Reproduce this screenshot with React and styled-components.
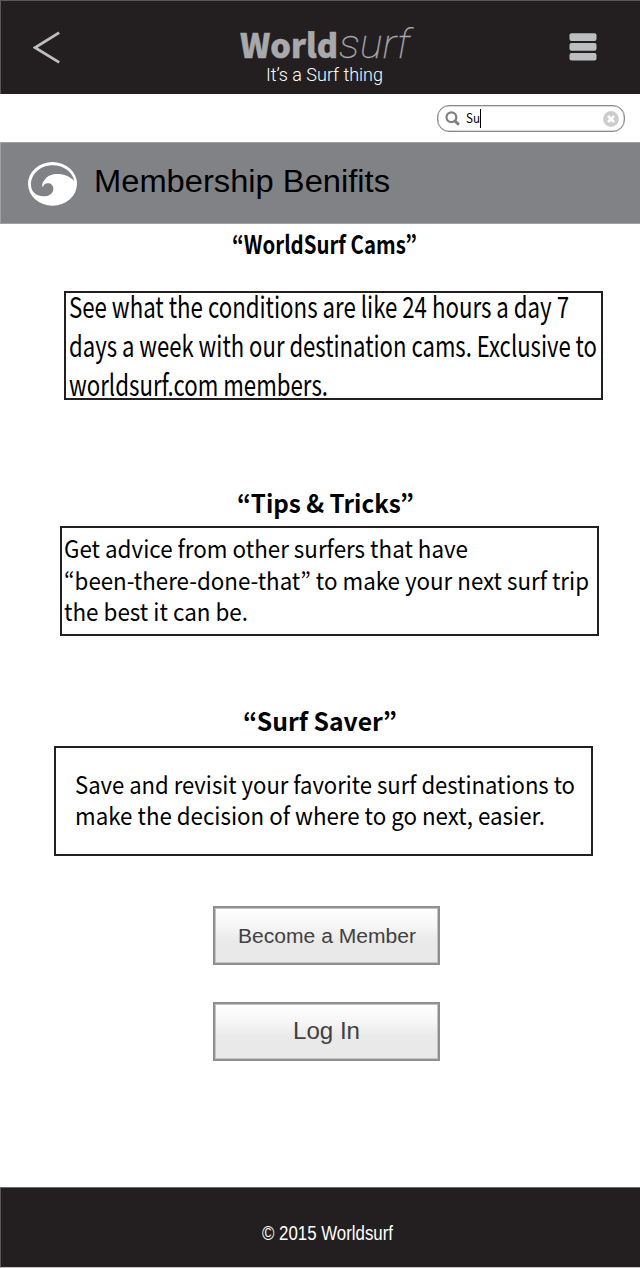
import React, { useLayoutEffect, useRef, useState } from "react";
import styled, { createGlobalStyle } from "styled-components";

const humanist = '"Noto Sans CJK KR", "Noto Sans", sans-serif';
const grotesque = '"Liberation Sans", Arial, sans-serif';

const GlobalStyle = createGlobalStyle`
  * { box-sizing: border-box; }
  body { margin: 0; background: #fff; }
  h1, h2, p { margin: 0; font-weight: inherit; }
`;

const Page = styled.div`
  display: flex;
  flex-direction: column;
  width: 640px;
  height: 1268px;
  overflow: hidden;
  background: #fff;
  color: #000;
  font-family: ${humanist};
`;

/* A single line of type set to an exact measure. */
const LineBox = styled.span`
  display: flex;
  width: ${(p) => p.$width}px;
  white-space: nowrap;
`;

const LineText = styled.span`
  flex: none;
  transform-origin: 0 50%;
`;

function Line({ width, children }) {
  const ref = useRef(null);
  const [natural, setNatural] = useState(width);
  useLayoutEffect(() => {
    setNatural(ref.current.getBoundingClientRect().width);
  }, []);
  return (
    <LineBox $width={width}>
      <LineText
        ref={ref}
        style={{
          transform: `scaleX(${width / natural})`,
          marginRight: width - natural,
        }}
      >
        {children}
      </LineText>
    </LineBox>
  );
}

const Header = styled.header`
  display: flex;
  height: 94px;
  padding: 0 43px 0 32px;
  background: #231f20;
  border-top: 1px solid #5b5859;
  border-left: 1px solid #5b5859;
`;

const IconButton = styled.button`
  display: flex;
  align-self: flex-start;
  margin: ${(p) => p.$top}px 0 0;
  padding: 0;
  border: 0;
  background: none;
`;

const Brand = styled.div`
  display: flex;
  flex-direction: column;
  width: 174px;
  margin: 0 auto 0 179px;
  padding-top: 19px;
`;

const Wordmark = styled.h1`
  display: flex;
  height: 44px;
  line-height: 48px;
  color: #a7a9ac;
`;

const World = styled.span`
  font-size: 33px;
  font-weight: 900;
  -webkit-text-stroke: 0.5px #a7a9ac;
`;

const Surf = styled.span`
  margin-left: 1px;
  font-family: Roboto, sans-serif;
  font-size: 41px;
  font-style: italic;
  font-weight: 100;
  -webkit-text-stroke: 0.3px #a7a9ac;
`;

const Tagline = styled.p`
  margin-left: 26px;
  color: #fff;
  font-family: Roboto, sans-serif;
  font-size: 17.5px;
  font-weight: 300;
  line-height: 22px;
`;

const SearchRow = styled.div`
  display: flex;
  justify-content: flex-end;
  height: 48px;
  padding: 11px 15px 0 0;
`;

const SearchField = styled.div`
  display: flex;
  align-items: center;
  width: 188px;
  height: 27px;
  padding: 0 5px 0 7px;
  border: 1px solid #8b8b8b;
  border-radius: 12px;
  box-shadow: inset 0 0 0 0.5px #b0b0b0;
`;

const Query = styled.span`
  margin: -2px 0 0 6px;
  font-size: 12.5px;
  line-height: 24px;
`;

const Caret = styled.span`
  width: 1px;
  height: 19px;
  margin-right: auto;
  background: #000;
`;

const TitleBand = styled.div`
  display: flex;
  height: 82px;
  padding-left: 27px;
  background: #808285;
  border: solid #a0a1a4;
  border-width: 1px 0 1px 1px;
`;

const LogoSlot = styled.div`
  display: flex;
  margin: 19px 17px 0 0;
`;

const BandTitle = styled.h2`
  padding-top: 19px;
  font-family: ${grotesque};
  font-size: 31px;
  line-height: 40px;
`;

const Main = styled.main`
  display: flex;
  flex: 1;
  flex-direction: column;
`;

const Benefit = styled.section`
  display: flex;
  flex-direction: column;
  margin-top: ${(p) => p.$top}px;
`;

const BenefitHeading = styled.h2`
  margin: 0 0 ${(p) => p.$gap}px ${(p) => p.$left}px;
  font-size: 25px;
  font-weight: 700;
  line-height: 30px;
`;

const BenefitBox = styled.div`
  width: 539px;
  height: ${(p) => p.$height}px;
  margin-left: ${(p) => p.$left}px;
  border: 2px solid #231f20;
`;

const BenefitText = styled.p`
  margin: ${(p) => p.$top}px 0 0 ${(p) => p.$left}px;
  font-size: ${(p) => p.$size}px;
  line-height: ${(p) => p.$leading}px;
`;

const Actions = styled.div`
  display: flex;
  flex-direction: column;
  gap: 37px;
  margin: 50px 0 0 213px;
`;

const ActionButton = styled.button`
  width: 227px;
  height: 59px;
  padding: 0 0 ${(p) => p.$lift || 0}px ${(p) => p.$inset}px;
  border: 2px solid #8f8f8f;
  box-shadow: inset 0 0 0 1px #c4c4c4;
  background: linear-gradient(#fff 0%, #f7f7f7 30%, #e9e9e9 60%, #e9e9e9 100%);
  color: #414042;
  font-family: ${grotesque};
  font-size: ${(p) => p.$size}px;
  line-height: 28px;
  text-align: left;
`;

const Footer = styled.footer`
  height: 81px;
  padding: 33px 0 0 261px;
  background: #231f20;
  border-top: 1px solid #6e6b6c;
  border-left: 1px solid #5b5859;
  border-bottom: 1px solid #c4c2c3;
  color: #fff;
  font-family: ${grotesque};
  font-size: 20.5px;
  line-height: 24px;
`;

const BackIcon = () => (
  <svg width="28" height="34" viewBox="0 0 28 34" fill="none">
    <path d="M26.2 1.6 2.2 16.6 26.2 31.4" stroke="#bcbec0" strokeWidth="2.8" />
  </svg>
);

const MenuIcon = () => (
  <svg width="28" height="28" viewBox="0 0 28 28" fill="#bcbec0">
    <rect x="0.5" y="0.3" width="27" height="7.6" rx="2" />
    <rect x="0.5" y="10.1" width="27" height="7.6" rx="2" />
    <rect x="0.5" y="19.9" width="27" height="7.6" rx="2" />
  </svg>
);

const SearchIcon = () => (
  <svg width="15" height="15" viewBox="0 0 15 15" fill="none" stroke="#808080">
    <circle cx="6.4" cy="6.3" r="4.9" strokeWidth="2.2" />
    <path d="M10 10 13 12.8" strokeWidth="3" strokeLinecap="round" />
  </svg>
);

const ClearIcon = () => (
  <svg width="16" height="16" viewBox="0 0 16 16">
    <circle cx="8" cy="8" r="7.9" fill="#cccccc" />
    <path d="M5 5 11 11M11 5 5 11" stroke="#fff" strokeWidth="2.5" />
  </svg>
);

const WaveLogo = () => (
  <svg width="49" height="44" viewBox="84 80 147 132">
    <ellipse cx="157.5" cy="145.5" rx="73.5" ry="65.5" fill="#fff" />
    <path
      fill="#808285"
      d="M223 137C217 108 189 90 158 90C121 90 93 116 93 147C93 158 96 165 101 171C108 179 119 183 130 183C147 183 160 174 160 160C160 149 151 143 142 144C134 145 130 149 129 156C124 149 128 140 134 133C143 121 157 116 172 116C193 116 209 123 223 137Z"
    />
  </svg>
);

const benefits = [
  {
    title: "“WorldSurf Cams”",
    top: 4,
    heading: { left: 232, width: 185, gap: 33 },
    box: { left: 64, height: 109 },
    text: { top: -7, left: 3, size: 29, leading: 39 },
    lines: [
      ["See what the conditions are like 24 hours a day 7", 500],
      ["days a week with our destination cams. Exclusive to", 528],
      ["worldsurf.com members.", 259],
    ],
  },
  {
    title: "“Tips & Tricks”",
    top: 87,
    heading: { left: 237, width: 177, gap: 9 },
    box: { left: 60, height: 110 },
    text: { top: 4, left: 1.5, size: 24, leading: 31.5 },
    lines: [
      ["Get advice from other surfers that have", 404],
      ["“been-there-done-that” to make your next surf trip", 525],
      ["the best it can be.", 184],
    ],
  },
  {
    title: "“Surf Saver”",
    top: 69,
    heading: { left: 243, width: 154, gap: 11 },
    box: { left: 54, height: 110 },
    text: { top: 21, left: 19, size: 24, leading: 30.8 },
    lines: [
      ["Save and revisit your favorite surf destinations to", 500],
      ["make the decision of where to go next, easier.", 470],
    ],
  },
];

export default function App() {
  return (
    <Page>
      <GlobalStyle />
      <Header>
        <IconButton $top={30} aria-label="Back">
          <BackIcon />
        </IconButton>
        <Brand>
          <Wordmark>
            <World>
              <Line width={98}>World</Line>
            </World>
            <Surf>
              <Line width={71}>surf</Line>
            </Surf>
          </Wordmark>
          <Tagline>
            <Line width={117}>It’s a Surf thing</Line>
          </Tagline>
        </Brand>
        <IconButton $top={32} aria-label="Menu">
          <MenuIcon />
        </IconButton>
      </Header>
      <SearchRow>
        <SearchField>
          <SearchIcon />
          <Query>
            <Line width={14}>Su</Line>
          </Query>
          <Caret />
          <ClearIcon />
        </SearchField>
      </SearchRow>
      <TitleBand>
        <LogoSlot>
          <WaveLogo />
        </LogoSlot>
        <BandTitle>
          <Line width={296}>Membership Benifits</Line>
        </BandTitle>
      </TitleBand>
      <Main>
        {benefits.map(({ title, top, heading, box, text, lines }) => (
          <Benefit key={title} $top={top}>
            <BenefitHeading $left={heading.left} $gap={heading.gap}>
              <Line width={heading.width}>{title}</Line>
            </BenefitHeading>
            <BenefitBox $left={box.left} $height={box.height}>
              <BenefitText
                $top={text.top}
                $left={text.left}
                $size={text.size}
                $leading={text.leading}
              >
                {lines.map(([line, width]) => (
                  <Line key={line} width={width}>
                    {line}
                  </Line>
                ))}
              </BenefitText>
            </BenefitBox>
          </Benefit>
        ))}
        <Actions>
          <ActionButton $size={20.5} $inset={23}>
            <Line width={178}>Become a Member</Line>
          </ActionButton>
          <ActionButton $size={24.5} $inset={78} $lift={2}>
            <Line width={67}>Log In</Line>
          </ActionButton>
        </Actions>
      </Main>
      <Footer>
        <Line width={131}>© 2015 Worldsurf</Line>
      </Footer>
    </Page>
  );
}
